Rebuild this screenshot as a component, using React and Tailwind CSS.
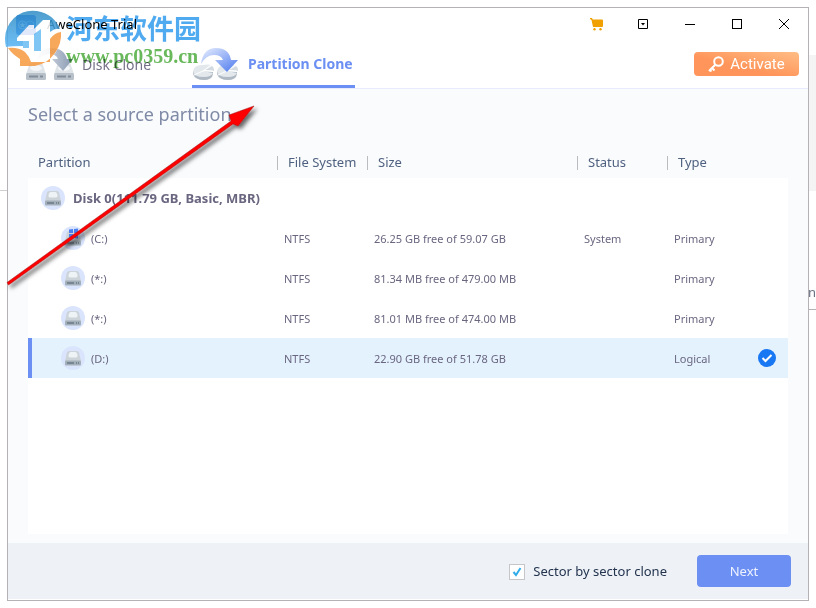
import { useState } from "react";

const partitions = [
    { id: 1, name: "(C:)", fs: "NTFS", size: "26.25 GB free of 59.07 GB", status: "System", type: "Primary", windows: true },
    { id: 2, name: "(*:)", fs: "NTFS", size: "81.34 MB free of 479.00 MB", status: "", type: "Primary" },
    { id: 3, name: "(*:)", fs: "NTFS", size: "81.01 MB free of 474.00 MB", status: "", type: "Primary" },
    { id: 4, name: "(D:)", fs: "NTFS", size: "22.90 GB free of 51.78 GB", status: "", type: "Logical" },
];

const headings = ["File System", "Size", "Status", "Type"];

const DriveIcon = ({ windows }) => (
    <svg className="w-6 h-6 shrink-0" viewBox="0 0 24 24" aria-hidden="true">
        <circle cx="12" cy="12" r="12" fill="#dae5fd" />
        <path d="M8 5h8q1.500 0 2 1.500L20 15H4l2-8.500Q6.500 5 8 5z" fill="#ccd3d9" />
        <rect x="4" y="14.500" width="16" height="5" rx="1" fill="#a3afb9" />
        <path d="M6 17h7M15 17h1M17 17h1" stroke="#6b7886" strokeWidth="1.500" />
        {windows ? (
            <path d="M8 3.500l4-.5v4H8zM13 3l4-.5V7h-4zM8 8h4v4l-4-.5zM13 8h4v4.500l-4-.5z" fill="#4c7ff0" />
        ) : (
            <path d="M9.500 6h5q1 0 1.500 1.500l.5 2q.3 2-1.500 2H9q-1.800 0-1.500-2l.5-2Q8.500 6 9.500 6z" fill="#eef3f6" />
        )}
    </svg>
);

const DiskCloneIcon = () => (
    <svg className="w-12 h-8" viewBox="0 0 48 32" aria-hidden="true">
        <defs>
            <linearGradient id="diskArrow" x1="0" x2="1" y1="0" y2="0">
                <stop offset="0" stopColor="#e8ebf0" />
                <stop offset="1" stopColor="#8999b2" />
            </linearGradient>
        </defs>
        {[0, 28].map((x) => (
            <g key={x} transform={`translate(${x} 0)`}>
                <path d="M5 15h10q1 0 1.500 1L20 26H0l3.500-10q.5-1 1.500-1z" fill="#dfe4e9" />
                <ellipse cx="10" cy="20" rx="6" ry="3" fill="#f4f6f8" />
                <rect y="25" width="20" height="7" rx="1.500" fill="#b7c0c9" />
                <path d="M3 28.500h9M14 28.500h3" stroke="#818d9b" strokeWidth="2" />
            </g>
        ))}
        <path d="M10 14Q14 0 25 0q13 0 16 11h6L37 23 26 11h6q-2-5-9-5-7 0-13 8z" fill="url(#diskArrow)" />
    </svg>
);

const PartitionCloneIcon = () => (
    <svg className="w-12 h-8" viewBox="0 0 48 32" aria-hidden="true">
        <defs>
            <linearGradient id="partArrow" x1="0" x2="1" y1="0" y2="1">
                <stop offset="0" stopColor="#e9effe" />
                <stop offset="1" stopColor="#4a78ee" />
            </linearGradient>
        </defs>
        {[0, 24].map((x) => (
            <g key={x} transform={`translate(${x} 0)`}>
                <path d="M1 23v3q2 6 11 6 8 0 9-6v-2l-9-1z" fill="#aeb9c3" />
                <path d="M20 17l-9 6 10 2q-2 4-9 4-11 0-11-6 1-6 9-6 6-1 10 0z" fill="#e3e8ec" />
                <path d="M13 22l7-4q2 1 2 5z" fill="#d3dbe1" />
                <path d="M2 27l9-4 8-6M11 23h10" stroke="#fff" strokeWidth="1" fill="none" />
            </g>
        ))}
        <path d="M9 16Q11 0 24 0q13 0 15 12h7l-11 12-12-12h8q-2-5-9-5-8 0-13 9z" fill="url(#partArrow)" />
    </svg>
);

const CartIcon = () => (
    <svg className="w-3.5 h-3.5" viewBox="0 0 14 14" fill="#f0a000" aria-hidden="true">
        <path d="M1 1h2l.7 1.500H13q1 0 1 1V9q0 1-1 1H4L2.500 3 1 2z" />
        <circle cx="5.500" cy="12.300" r="1.200" />
        <circle cx="11.500" cy="12.300" r="1.200" />
    </svg>
);

const KeyIcon = () => (
    <svg className="w-4 h-4" viewBox="0 0 16 16" fill="none" stroke="#fff" strokeWidth="2" aria-hidden="true">
        <circle cx="10.500" cy="5.500" r="4.300" />
        <path d="M7.500 8.500L1 15M4 12l2.500 2.500M1.500 13.500L3.500 15.500" />
    </svg>
);

const AppLogo = () => (
    <svg className="w-5 h-5" viewBox="0 0 20 20" aria-hidden="true">
        <rect width="20" height="20" rx="3" fill="#2f68df" />
        <circle cx="6.500" cy="10" r="4" fill="none" stroke="#c9dcfa" />
        <circle cx="14" cy="10" r="4" fill="none" stroke="#8fb3f2" />
        <path d="M6.500 7l1 2h2l-1.500 1.500.5 2-2-1-2 1 .5-2L3.500 9h2z" fill="#e5eefc" />
    </svg>
);

const Watermark = () => (
    <div className="pointer-events-none absolute left-1 top-2 flex gap-1 mix-blend-multiply">
        <div className="pl-[62px] pt-1">
            <p className="text-[27px] leading-8 font-bold text-[#50aaf0] font-['Noto_Sans_CJK_SC',sans-serif]">河东软件园</p>
            <p className="text-[20px] leading-6 font-bold text-[#69b95c] font-['Liberation_Serif',serif]">www.pc0359.cn</p>
        </div>
    </div>
);

const WatermarkLogo = () => (
    <svg className="pointer-events-none absolute left-1 top-2 w-[58px] h-[60px] opacity-85" viewBox="0 0 58 60" aria-hidden="true">
        <defs>
            <linearGradient id="markBlue" x1="0" x2="0" y1="0" y2="1">
                <stop offset="0" stopColor="#2f8cc4" />
                <stop offset="1" stopColor="#55b4f5" />
            </linearGradient>
        </defs>
        <circle cx="29" cy="30" r="27" fill="#fff" />
        <path d="M2 39Q-2 22 10 10 20 1 33 3q17 3 23 18-5-1-10 3V12h-7l-9 9v-4h-5L13 30v3h6v5Q8 38 2 39z" fill="url(#markBlue)" />
        <path d="M30 26l7-5v22h-7zM19 33h6v7h-6z" fill="#6bbdf3" />
        <path d="M57 24q1 11-6 21-8 11-20 13H16V51Q8 46 4 40q10-1 17 4 4 4 6 10h19V31q4-6 11-7z" fill="#f6993f" />
    </svg>
);

const RedArrow = () => (
    <svg className="pointer-events-none absolute left-0 top-0 w-[270px] h-[300px]" viewBox="0 0 270 300" aria-hidden="true">
        <defs>
            <filter id="arrowShadow" x="-10%" y="-10%" width="120%" height="120%">
                <feDropShadow dx="3" dy="3" stdDeviation="2" floodColor="#000" floodOpacity=".6" />
            </filter>
        </defs>
        <g filter="url(#arrowShadow)" stroke="#9a1515" strokeWidth=".5">
            <path d="M7 282.500L231 121l-2-6 25-9-16 20-5-2L8.500 285z" fill="#fe0000" />
        </g>
    </svg>
);

const TitleBar = () => (
    <header className="flex h-8 shrink-0 items-center justify-between pl-2 pr-px">
        <h1 className="flex items-center gap-[11px] pt-0.5 text-[13px] text-black">
            <AppLogo />
            AweClone Trial
        </h1>
        <div className="flex">
            <button aria-label="Buy" className="flex h-8 w-[46px] items-center justify-center"><CartIcon /></button>
            <button aria-label="Menu" className="flex h-8 w-[47px] items-center justify-center">
                <svg className="w-2.5 h-2.5" viewBox="0 0 10 10" aria-hidden="true">
                    <path d="M.5.5h9v9h-9z" fill="none" stroke="#000" />
                    <path d="M3 4h4L5 6.500z" />
                </svg>
            </button>
            <button aria-label="Minimize" className="flex h-8 w-[47px] items-center justify-center">
                <span className="h-px w-2.5 bg-black"></span>
            </button>
            <button aria-label="Maximize" className="flex h-8 w-[47px] items-center justify-center">
                <span className="h-2.5 w-2.5 border border-black"></span>
            </button>
            <button aria-label="Close" className="flex h-8 w-[47px] items-center justify-center">
                <svg className="w-2.5 h-2.5" viewBox="0 0 10 10" stroke="#000" aria-hidden="true">
                    <path d="M0 0l10 10M10 0L0 10" />
                </svg>
            </button>
        </div>
    </header>
);

const Tabs = () => (
    <nav className="flex h-[49px] shrink-0 items-start justify-between border-b border-[#e8ebfb] pl-4 pr-[9px]">
        <div className="flex h-12">
            <button className="flex w-[168px] items-center gap-2 pl-0.5 text-[14px] text-[#77718a]">
                <DiskCloneIcon />
                Disk Clone
            </button>
            <button className="flex items-center gap-2 border-b-3 border-[#6b8ff2] pr-0.5 pt-0.5 text-[14px] font-bold text-[#6b8ff2]">
                <PartitionCloneIcon />
                Partition Clone
            </button>
        </div>
        <button className="mt-3 flex h-6 w-[105px] items-center justify-center gap-1.5 rounded bg-linear-to-tr from-[#ff955a] from-40% to-[#ffbd85] text-[15px] text-white font-[Roboto,sans-serif]">
            <KeyIcon />
            Activate
        </button>
    </nav>
);

const App = () => {
    const [selected, setSelected] = useState(4);
    const [sector, setSector] = useState(true);

    return (
        <div className="relative h-screen overflow-hidden bg-white p-[7px] font-['Noto_Sans',sans-serif]">
            {/* what shows of the windows behind */}
            <div className="absolute left-0 top-[190px] h-px w-2 bg-[#cfcfcf]"></div>
            <div className="absolute right-0 top-[55px] h-[136px] w-2 bg-[#f4f4f4]"></div>
            <div className="absolute right-0 top-[283px] flex h-[27px] w-2 justify-end overflow-hidden border-b border-[#b5b1b5] text-[13px] text-gray-500">An</div>

            <div className="relative flex h-full flex-col border border-[#b5b1b5] bg-white pb-px">
                <TitleBar />
                <Tabs />

                <main className="flex flex-1 flex-col bg-[#fafbfd] px-5 pb-[9px]">
                    <h2 className="flex h-[57px] items-center pb-1.5 text-[18px] text-[#7f8aa6]">Select a source partition</h2>
                    <div className="flex flex-1 flex-col">
                        <table className="w-full table-fixed border-separate border-spacing-0 text-left">
                            <colgroup>
                                <col />
                                <col className="w-[90px]" />
                                <col className="w-[210px]" />
                                <col className="w-[90px]" />
                                <col className="w-[121px]" />
                            </colgroup>
                            <thead className="text-[13px] text-[#4f6180]">
                                <tr className="h-8">
                                    <th className="pl-2.5 pt-0.5 font-normal">Partition</th>
                                    {headings.map((h) => (
                                        <th key={h} className="pt-0.5 font-normal">
                                            <span className="flex h-3.5 items-center whitespace-nowrap border-l border-[#bcbcc0] pl-2.5">{h}</span>
                                        </th>
                                    ))}
                                </tr>
                            </thead>
                            <tbody className="bg-white text-[11px] text-[#6a6680]">
                                <tr className="h-10">
                                    <th colSpan={5} className="pl-[13px]">
                                        <span className="flex items-center gap-2 text-[13px] font-bold">
                                            <DriveIcon />
                                            <span className="pt-0.5">Disk 0(111.79 GB, Basic, MBR)</span>
                                        </span>
                                    </th>
                                </tr>
                                {partitions.map((p) => (
                                    <tr
                                        key={p.id}
                                        onClick={() => setSelected(p.id)}
                                        className={selected === p.id ? "h-10 bg-[#e4f2fe]" : "h-10"}
                                    >
                                        <td className={selected === p.id ? "border-l-4 border-[#6b8ff2] pl-[29px]" : "pl-[33px]"}>
                                            <span className="flex items-center gap-1.5">
                                                <DriveIcon windows={p.windows} />
                                                <span className="pt-0.5">{p.name}</span>
                                            </span>
                                        </td>
                                        <td className="pl-[7px] pt-0.5">{p.fs}</td>
                                        <td className="pl-[7px] pt-0.5">{p.size}</td>
                                        <td className="pl-[7px] pt-0.5">{p.status}</td>
                                        <td className="pl-[7px] pr-3">
                                            <span className="flex items-center justify-between">
                                                <span className="pt-0.5">{p.type}</span>
                                                {selected === p.id && (
                                                    <svg className="w-[18px] h-[18px]" viewBox="0 0 18 18" aria-hidden="true">
                                                        <circle cx="9" cy="9" r="9" fill="#1877f2" />
                                                        <path d="M4.500 9l3 3 6-6" fill="none" stroke="#fff" strokeWidth="2" />
                                                    </svg>
                                                )}
                                            </span>
                                        </td>
                                    </tr>
                                ))}
                            </tbody>
                        </table>
                        <div className="flex-1 bg-white"></div>
                    </div>
                </main>

                <footer className="flex h-14 shrink-0 items-center justify-end gap-[30px] bg-[#eef1f6] pr-[17px]">
                    <label className="flex items-center gap-2 pt-0.5 text-[13px] text-[#23344f]">
                        <input
                            type="checkbox"
                            checked={sector}
                            onChange={(e) => setSector(e.target.checked)}
                            className="peer sr-only"
                        />
                        <span className="flex h-4 w-4 items-center justify-center border border-[#c6c6c8] bg-white peer-focus-visible:border-[#6b8ff2]">
                            {sector && (
                                <svg className="w-2.5 h-2.5" viewBox="0 0 10 10" fill="none" stroke="#31aeea" strokeWidth="2" aria-hidden="true">
                                    <path d="M1.500 5L4 8l4.500-7" />
                                </svg>
                            )}
                        </span>
                        Sector by sector clone
                    </label>
                    <button className="h-8 w-[94px] rounded bg-[#6b8ff2] pt-0.5 text-[13px] text-[#eef2ff]">Next</button>
                </footer>
            </div>

            <WatermarkLogo />
            <Watermark />
            <RedArrow />
        </div>
    );
};

export default App;
